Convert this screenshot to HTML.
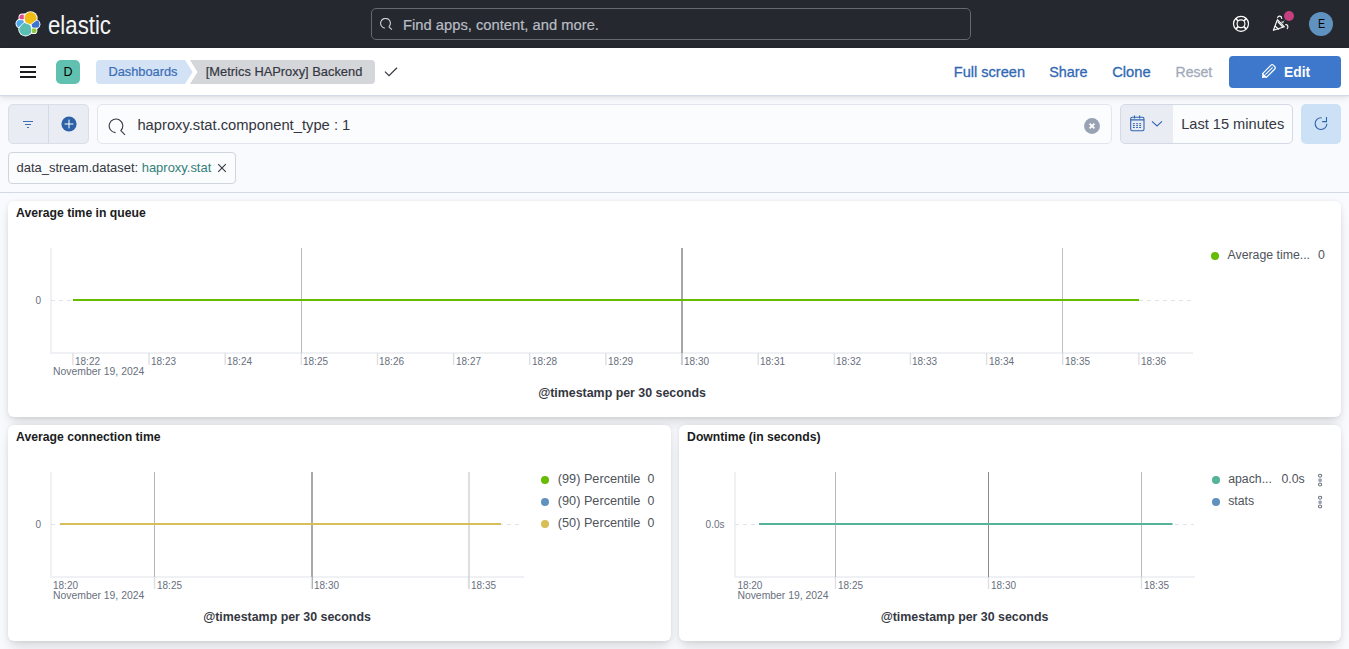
<!DOCTYPE html>
<html><head><meta charset="utf-8">
<style>
*{box-sizing:border-box;margin:0;padding:0}
html,body{width:1349px;height:649px;overflow:hidden;background:#f9fafd;font-family:"Liberation Sans",sans-serif;color:#343741}
.abs{position:absolute}
.txt{position:absolute;white-space:nowrap;line-height:1}
.med{-webkit-text-stroke:0.25px currentColor}
.panel{position:absolute;background:#fff;border-radius:6px;box-shadow:0 0.9px 4px -1px rgba(0,0,0,.08),0 2.6px 8px -1px rgba(0,0,0,.06),0 5.7px 12px -1px rgba(0,0,0,.05),0 15px 15px -1px rgba(0,0,0,.04)}
svg text{font-family:"Liberation Sans",sans-serif}
</style></head><body>
<div class="abs" style="left:0;top:0;width:1349px;height:48px;background:#25282f"></div>
<svg class="abs" style="left:12px;top:8px" width="32" height="32" viewBox="12 8 32 32">
<defs>
<clipPath id="cy"><polygon points="24.2,0 50,0 50,9.4 30.5,24.8 24.1,22.3 24.2,19.7"/></clipPath>
<clipPath id="cp"><polygon points="0,0 24.2,0 24.2,19.7 0,19.7"/></clipPath>
<clipPath id="cl"><polygon points="0,19.7 24.2,19.7 24.1,22.3 0,46.4"/></clipPath>
<clipPath id="ct"><polygon points="24.1,22.3 30.5,24.8 31.6,28.1 31.6,50 0,50 0,46.4"/></clipPath>
<clipPath id="cb"><polygon points="50,9.4 30.5,24.8 31.6,28.1 50,28.1"/></clipPath>
<clipPath id="cg"><polygon points="31.6,28.1 50,28.1 50,50 31.6,50"/></clipPath>
</defs>
<g fill="#fff">
<circle cx="30.5" cy="18.3" r="7.1"/><circle cx="22.3" cy="17.3" r="3.8"/><circle cx="20.6" cy="23.6" r="5.1"/><circle cx="25.6" cy="29.2" r="7.3"/><circle cx="35.5" cy="24.3" r="4.9"/><circle cx="33.8" cy="30.4" r="3.6"/>
</g>
<circle cx="30.5" cy="18.3" r="6.2" fill="#f0bd16" clip-path="url(#cy)"/>
<circle cx="22.3" cy="17.3" r="2.9" fill="#e54a8f" clip-path="url(#cp)"/>
<circle cx="20.6" cy="23.6" r="4.2" fill="#4fa8ee" clip-path="url(#cl)"/>
<circle cx="25.6" cy="29.2" r="6.4" fill="#5bbeb3" clip-path="url(#ct)"/>
<circle cx="35.5" cy="24.3" r="4.0" fill="#3d74cf" clip-path="url(#cb)"/>
<circle cx="33.8" cy="30.4" r="2.7" fill="#8dc63f" clip-path="url(#cg)"/>
<path d="M24.2 13 V19.7 H19 M24.2 19.7 L24.1 22.3 L18.5 28 M24.1 22.3 L30.5 24.8 L37 19.7 M30.5 24.8 L31.6 28.1 V34 M31.6 28.1 H38" fill="none" stroke="#fff" stroke-width="0.8"/>
</svg>
<div class="txt" style="left:48.3px;top:14.00px;font-size:24px;color:#f4f4f5;transform:scale(0.925,1.04);transform-origin:0 20px;">elastic</div>
<div class="abs" style="left:371px;top:8px;width:600px;height:32px;border:1px solid #66696f;border-radius:5px"></div>
<svg class="abs" style="left:378.5px;top:18.2px" width="14" height="14" viewBox="0 0 14 14"><path d="M10.04 8.64 A4.9 4.9 0 1 0 5.8 10.1" fill="none" stroke="#d0d2d6" stroke-width="1.1"/><path d="M9.7 8.6 L12.9 11.7" stroke="#d0d2d6" stroke-width="1.1"/></svg>
<div class="txt" style="left:403px;top:18.00px;font-size:14.75px;color:#b9bdc4;-webkit-text-stroke:0.2px #b9bdc4;">Find apps, content, and more.</div>
<svg class="abs" style="left:1232px;top:15px" width="18" height="18" viewBox="0 0 18 18"><circle cx="9" cy="8.8" r="7.5" fill="none" stroke="#fff" stroke-width="1.2"/><circle cx="9" cy="8.8" r="3.9" fill="none" stroke="#fff" stroke-width="1.2"/><path d="M3.9 3.7 L6.2 6 M14.1 3.7 L11.8 6 M3.9 13.9 L6.2 11.6 M14.1 13.9 L11.8 11.6" stroke="#fff" stroke-width="1.7"/></svg>
<svg class="abs" style="left:1268px;top:8px" width="30" height="28" viewBox="0 0 30 28"><g fill="none" stroke="#fff" stroke-width="1.15" stroke-linecap="round" stroke-linejoin="round"><path d="M5.4 22.3 L9.4 11.6 L16.4 18.8 Z"/><path d="M9.9 13.9 L14.6 18.8"/><path d="M7.3 18.2 L10.6 21.2"/><path d="M9.6 9.6 C10.2 7.4 13.6 7.6 13.7 10.4"/><path d="M17.8 16.6 C19.8 16.2 20.6 19.4 19.2 20.6"/></g><path d="M16.2 12.6 L13.9 14.9 M13.9 14.9 L14.1 13.1 M13.9 14.9 L15.7 14.7" stroke="#c9c9cc" stroke-width="1" fill="none"/></svg>
<div class="abs" style="left:1283.7px;top:10.5px;width:10.6px;height:10.6px;border-radius:50%;background:#c4407f"></div>
<div class="abs" style="left:1309px;top:12px;width:24px;height:24px;border-radius:50%;background:#6092c0"></div>
<div class="txt" style="left:1317.6px;top:18.00px;font-size:12.5px;color:#000;transform:scaleX(0.85);transform-origin:0 0;">E</div>
<div class="abs" style="left:0;top:48px;width:1349px;height:48px;background:#fff;border-bottom:1px solid #d3dae6;box-shadow:0 1px 2px rgba(0,0,0,.06),0 3px 7px rgba(0,0,0,.07)"></div>
<div class="abs" style="left:20px;top:66px;width:16px;height:2px;background:#1a1c21"></div>
<div class="abs" style="left:20px;top:71px;width:16px;height:2px;background:#1a1c21"></div>
<div class="abs" style="left:20px;top:76px;width:16px;height:2px;background:#1a1c21"></div>
<div class="abs" style="left:56px;top:60px;width:24px;height:24px;border-radius:5px;background:#61c1b0"></div>
<div class="txt" style="left:63.5px;top:66.00px;font-size:12.5px;color:#000;">D</div>
<svg class="abs" style="left:96px;top:60px" width="290" height="24" viewBox="0 0 290 24">
<path d="M4 0 H89 L96.7 12 L89 24 H4 A4 4 0 0 1 0 20 V4 A4 4 0 0 1 4 0 Z" fill="#d3e2f5"/>
<path d="M94 0 H275 A4 4 0 0 1 279 4 V20 A4 4 0 0 1 275 24 H94 L101.5 12 Z" fill="#d4d6da"/>
</svg>
<div class="txt" style="left:108.5px;top:66.00px;font-size:12.8px;color:#3a6db7;-webkit-text-stroke:0.2px #3a6db7;">Dashboards</div>
<div class="txt" style="left:205.8px;top:66.00px;font-size:12.87px;color:#343741;-webkit-text-stroke:0.2px #343741;">[Metrics HAProxy] Backend</div>
<svg class="abs" style="left:384px;top:67px" width="14" height="10" viewBox="0 0 14 10"><path d="M1 4.6 L5 8.6 L13 0.8" fill="none" stroke="#343741" stroke-width="1.2"/></svg>
<div class="txt" style="left:953.8px;top:65.00px;font-size:14.57px;color:#3169b3;-webkit-text-stroke:0.3px #3169b3;">Full screen</div>
<div class="txt" style="left:1049.2px;top:65.00px;font-size:14.4px;color:#3169b3;-webkit-text-stroke:0.3px #3169b3;">Share</div>
<div class="txt" style="left:1112.2px;top:65.00px;font-size:14.73px;color:#3169b3;-webkit-text-stroke:0.3px #3169b3;">Clone</div>
<div class="txt" style="left:1175.6px;top:65.00px;font-size:14.04px;color:#a2abba;-webkit-text-stroke:0.3px #a2abba;">Reset</div>
<div class="abs" style="left:1229px;top:56px;width:112px;height:32px;border-radius:4px;background:#3d78cc"></div>
<svg class="abs" style="left:1259px;top:63px" width="18" height="18" viewBox="0 0 16 16"><g transform="rotate(-45 8 8)"><path d="M0.4 8 L3.6 5.4 V10.6 Z" fill="#fff"/><path d="M3.6 5.6 H14.2 A1.4 1.4 0 0 1 15.6 7 V9 A1.4 1.4 0 0 1 14.2 10.4 H3.6 Z" fill="none" stroke="#fff" stroke-width="1.1" stroke-linejoin="round"/><path d="M4.6 8 H13.8" stroke="#fff" stroke-width="0.9"/></g></svg>
<div class="txt" style="left:1284px;top:66.00px;font-size:13.8px;font-weight:bold;color:#fff;">Edit</div>
<div class="abs" style="left:8px;top:104px;width:81px;height:40px;background:#e9edf3;border:1px solid #d9dee8;border-radius:5px"></div>
<div class="abs" style="left:48px;top:105px;width:1px;height:38px;background:#d3dae6"></div>
<svg class="abs" style="left:22px;top:119px" width="12" height="12" viewBox="0 0 12 12"><path d="M1 2.5 H11 M3 5.5 H9 M5 8.5 H7" stroke="#3d6db5" stroke-width="1.1"/></svg>
<svg class="abs" style="left:60.5px;top:115.5px" width="16" height="16" viewBox="0 0 16 16"><circle cx="8" cy="8" r="7.6" fill="#2c61a8"/><path d="M8 3.6 V12.4 M3.6 8 H12.4" stroke="#fff" stroke-width="1"/></svg>
<div class="abs" style="left:97px;top:104px;width:1015px;height:40px;background:#fbfcfd;border:1px solid #e0e5ee;border-radius:5px"></div>
<svg class="abs" style="left:108px;top:118px" width="18" height="18" viewBox="0 0 18 18"><path d="M12.8 12.6 A6.8 6.8 0 1 0 7.6 14.6" fill="none" stroke="#343741" stroke-width="1.1"/><path d="M12.6 12.4 L17 16.8" stroke="#343741" stroke-width="1.1"/></svg>
<div class="txt" style="left:137.4px;top:118.00px;font-size:14.75px;color:#343741;">haproxy.stat.component_type : 1</div>
<svg class="abs" style="left:1084px;top:118px" width="16" height="16" viewBox="0 0 16 16"><circle cx="8" cy="8" r="7.95" fill="#98a2b3"/><path d="M5.6 5.6 L10.4 10.4 M10.4 5.6 L5.6 10.4" stroke="#fff" stroke-width="1.8"/></svg>
<div class="abs" style="left:1120px;top:104px;width:173px;height:40px;background:linear-gradient(90deg,#e9edf3 0,#e9edf3 52px,#fbfcfd 52px);border:1px solid #d3dae6;border-radius:5px"></div>
<svg class="abs" style="left:1129px;top:115px" width="16" height="17" viewBox="0 0 16 17"><rect x="1.7" y="2.2" width="13.3" height="13.6" rx="1.6" fill="none" stroke="#3064b0" stroke-width="1.1"/><path d="M1.7 4.9 H15 M5.5 0.6 V3.4 M10.6 0.6 V3.4" stroke="#3064b0" stroke-width="1.1" fill="none"/><path d="M3.9 8.7h1.9M7.2 8.7h1.8M10.2 8.7h1.9M3.9 10.6h1.9M7.2 10.6h1.8M10.2 10.6h1.9M3.9 12.5h1.9M7.2 12.5h1.8M10.2 12.5h1.9" stroke="#3064b0" stroke-width="1"/></svg>
<svg class="abs" style="left:1151px;top:120px" width="12" height="8" viewBox="0 0 12 8"><path d="M1 1.4 L6 6 L11 1.4" fill="none" stroke="#3064b0" stroke-width="1.1"/></svg>
<div class="txt" style="left:1181.2px;top:117.00px;font-size:14.6px;color:#343741;">Last 15 minutes</div>
<div class="abs" style="left:1301px;top:104px;width:40px;height:40px;background:#cce1f5;border-radius:5px"></div>
<svg class="abs" style="left:1313px;top:116px" width="16" height="16" viewBox="0 0 16 16"><path d="M13.85 7.7 A5.85 5.85 0 1 1 8.6 1.85" fill="none" stroke="#2f63ab" stroke-width="1.1"/><path d="M9.2 5.6 H13.5 V1" fill="none" stroke="#2f63ab" stroke-width="1.1"/></svg>
<div class="abs" style="left:8px;top:152px;width:228px;height:32px;background:#fbfcfd;border:1px solid #cfd5df;border-radius:4px"></div>
<div class="txt" style="left:16.6px;top:162.00px;font-size:12.95px;color:#343741;">data_stream.dataset: <span style="color:#347f7b">haproxy.stat</span></div>
<svg class="abs" style="left:217px;top:163px" width="10" height="10" viewBox="0 0 10 10"><path d="M1.2 1.2 L8.8 8.8 M8.8 1.2 L1.2 8.8" stroke="#343741" stroke-width="1.1"/></svg>
<div class="abs" style="left:0;top:192px;width:1349px;height:1px;background:#d3dae6"></div>
<div class="panel" style="left:8px;top:201px;width:1333px;height:216px"></div>
<div class="panel" style="left:8px;top:425px;width:663px;height:216px"></div>
<div class="panel" style="left:679px;top:425px;width:662px;height:216px"></div>
<div class="txt" style="left:16.1px;top:207.00px;font-size:12.2px;font-weight:bold;color:#1a1c21;">Average time in queue</div>
<div class="txt" style="left:16.1px;top:431.00px;font-size:12.2px;font-weight:bold;color:#1a1c21;">Average connection time</div>
<div class="txt" style="left:687.1px;top:431.00px;font-size:12.2px;font-weight:bold;color:#1a1c21;">Downtime (in seconds)</div>
<svg class="abs" style="left:0;top:0" width="1349" height="649" viewBox="0 0 1349 649" id="charts">
<line x1="51" y1="248" x2="51" y2="354" stroke="#f0f1f4" stroke-width="2"/>
<line x1="51" y1="353" x2="1193" y2="353" stroke="#f0f1f4" stroke-width="2"/>
<line x1="51" y1="300.5" x2="1192" y2="300.5" stroke="#dfe3ea" stroke-width="1" stroke-dasharray="4 4"/>
<line x1="301.5" y1="248" x2="301.5" y2="365" stroke="#bababa" stroke-width="1"/>
<line x1="682" y1="248" x2="682" y2="365" stroke="#a6a6a6" stroke-width="2"/>
<line x1="1062.5" y1="248" x2="1062.5" y2="365" stroke="#c0c0c0" stroke-width="1"/>
<line x1="72.9" y1="353" x2="72.9" y2="365" stroke="#dcdfe4" stroke-width="1.4"/>
<line x1="149.04000000000002" y1="353" x2="149.04000000000002" y2="365" stroke="#dcdfe4" stroke-width="1.4"/>
<line x1="225.18" y1="353" x2="225.18" y2="365" stroke="#dcdfe4" stroke-width="1.4"/>
<line x1="301.32000000000005" y1="353" x2="301.32000000000005" y2="365" stroke="#dcdfe4" stroke-width="1.4"/>
<line x1="377.46000000000004" y1="353" x2="377.46000000000004" y2="365" stroke="#dcdfe4" stroke-width="1.4"/>
<line x1="453.6" y1="353" x2="453.6" y2="365" stroke="#dcdfe4" stroke-width="1.4"/>
<line x1="529.74" y1="353" x2="529.74" y2="365" stroke="#dcdfe4" stroke-width="1.4"/>
<line x1="605.88" y1="353" x2="605.88" y2="365" stroke="#dcdfe4" stroke-width="1.4"/>
<line x1="682.02" y1="353" x2="682.02" y2="365" stroke="#dcdfe4" stroke-width="1.4"/>
<line x1="758.16" y1="353" x2="758.16" y2="365" stroke="#dcdfe4" stroke-width="1.4"/>
<line x1="834.3" y1="353" x2="834.3" y2="365" stroke="#dcdfe4" stroke-width="1.4"/>
<line x1="910.4399999999999" y1="353" x2="910.4399999999999" y2="365" stroke="#dcdfe4" stroke-width="1.4"/>
<line x1="986.58" y1="353" x2="986.58" y2="365" stroke="#dcdfe4" stroke-width="1.4"/>
<line x1="1062.72" y1="353" x2="1062.72" y2="365" stroke="#dcdfe4" stroke-width="1.4"/>
<line x1="1138.8600000000001" y1="353" x2="1138.8600000000001" y2="365" stroke="#dcdfe4" stroke-width="1.4"/>
<line x1="73" y1="300" x2="1139" y2="300" stroke="#68bc00" stroke-width="2"/>
<text x="75" y="365" font-size="10" fill="#69707d">18:22</text>
<text x="151" y="365" font-size="10" fill="#69707d">18:23</text>
<text x="227" y="365" font-size="10" fill="#69707d">18:24</text>
<text x="303" y="365" font-size="10" fill="#69707d">18:25</text>
<text x="379" y="365" font-size="10" fill="#69707d">18:26</text>
<text x="456" y="365" font-size="10" fill="#69707d">18:27</text>
<text x="532" y="365" font-size="10" fill="#69707d">18:28</text>
<text x="608" y="365" font-size="10" fill="#69707d">18:29</text>
<text x="684" y="365" font-size="10" fill="#69707d">18:30</text>
<text x="760" y="365" font-size="10" fill="#69707d">18:31</text>
<text x="836" y="365" font-size="10" fill="#69707d">18:32</text>
<text x="912" y="365" font-size="10" fill="#69707d">18:33</text>
<text x="989" y="365" font-size="10" fill="#69707d">18:34</text>
<text x="1065" y="365" font-size="10" fill="#69707d">18:35</text>
<text x="1141" y="365" font-size="10" fill="#69707d">18:36</text>
<text x="53" y="375.4" font-size="10.4" fill="#69707d">November 19, 2024</text>
<text x="41" y="303.5" font-size="10" fill="#69707d" text-anchor="end">0</text>
<text x="622" y="397.2" font-size="12.4" fill="#343741" font-weight="700" text-anchor="middle">@timestamp per 30 seconds</text>
<circle cx="1215" cy="256" r="4" fill="#68bc00"/>
<text x="1227.5" y="259" font-size="12.3" fill="#4e535b">Average time...</text>
<text x="1318" y="259" font-size="12.3" fill="#4e535b">0</text>
<line x1="51" y1="472" x2="51" y2="578" stroke="#f0f1f4" stroke-width="2"/>
<line x1="51" y1="577" x2="524" y2="577" stroke="#f0f1f4" stroke-width="2"/>
<line x1="51" y1="524.5" x2="523" y2="524.5" stroke="#dfe3ea" stroke-width="1" stroke-dasharray="4 4"/>
<line x1="154.5" y1="472" x2="154.5" y2="589" stroke="#b5b5b5" stroke-width="1"/>
<line x1="312" y1="472" x2="312" y2="589" stroke="#a8a8a8" stroke-width="2"/>
<line x1="469" y1="472" x2="469" y2="589" stroke="#c8c8c8" stroke-width="1.2"/>
<line x1="154.5" y1="577" x2="154.5" y2="589" stroke="#dcdfe4" stroke-width="1.4"/>
<line x1="311.5" y1="577" x2="311.5" y2="589" stroke="#dcdfe4" stroke-width="1.4"/>
<line x1="468.5" y1="577" x2="468.5" y2="589" stroke="#dcdfe4" stroke-width="1.4"/>
<line x1="60" y1="524" x2="501" y2="524" stroke="#d6bf57" stroke-width="2"/>
<text x="53" y="588.8" font-size="10" fill="#69707d">18:20</text>
<text x="157.0" y="588.8" font-size="10" fill="#69707d">18:25</text>
<text x="314.0" y="588.8" font-size="10" fill="#69707d">18:30</text>
<text x="471.0" y="588.8" font-size="10" fill="#69707d">18:35</text>
<text x="53" y="598.8" font-size="10.4" fill="#69707d">November 19, 2024</text>
<text x="41" y="527.5" font-size="10" fill="#69707d" text-anchor="end">0</text>
<text x="287" y="621.2" font-size="12.4" fill="#343741" font-weight="700" text-anchor="middle">@timestamp per 30 seconds</text>
<circle cx="545" cy="480" r="4" fill="#68bc00"/>
<text x="557.8" y="483" font-size="12.7" fill="#4e535b">(99) Percentile</text>
<text x="647.6" y="483" font-size="12.3" fill="#4e535b">0</text>
<circle cx="545" cy="502" r="4" fill="#6092c0"/>
<text x="557.8" y="505" font-size="12.7" fill="#4e535b">(90) Percentile</text>
<text x="647.6" y="505" font-size="12.3" fill="#4e535b">0</text>
<circle cx="545" cy="524" r="4" fill="#d6bf57"/>
<text x="557.8" y="527" font-size="12.7" fill="#4e535b">(50) Percentile</text>
<text x="647.6" y="527" font-size="12.3" fill="#4e535b">0</text>
<line x1="735" y1="472" x2="735" y2="578" stroke="#f0f1f4" stroke-width="2"/>
<line x1="735" y1="577" x2="1195" y2="577" stroke="#f0f1f4" stroke-width="2"/>
<line x1="735" y1="524.5" x2="1194" y2="524.5" stroke="#dfe3ea" stroke-width="1" stroke-dasharray="4 4"/>
<line x1="835.5" y1="472" x2="835.5" y2="589" stroke="#bababa" stroke-width="1"/>
<line x1="988.5" y1="472" x2="988.5" y2="589" stroke="#8c8c8c" stroke-width="1"/>
<line x1="1141.5" y1="472" x2="1141.5" y2="589" stroke="#bababa" stroke-width="1"/>
<line x1="835.5" y1="577" x2="835.5" y2="589" stroke="#dcdfe4" stroke-width="1.4"/>
<line x1="988.5" y1="577" x2="988.5" y2="589" stroke="#dcdfe4" stroke-width="1.4"/>
<line x1="1141.5" y1="577" x2="1141.5" y2="589" stroke="#dcdfe4" stroke-width="1.4"/>
<line x1="759" y1="524" x2="1172.5" y2="524" stroke="#54b399" stroke-width="2"/>
<text x="737.4" y="588.8" font-size="10" fill="#69707d">18:20</text>
<text x="838.0" y="588.8" font-size="10" fill="#69707d">18:25</text>
<text x="991.0" y="588.8" font-size="10" fill="#69707d">18:30</text>
<text x="1144.0" y="588.8" font-size="10" fill="#69707d">18:35</text>
<text x="737.4" y="598.6" font-size="10.4" fill="#69707d">November 19, 2024</text>
<text x="724.5" y="527.5" font-size="10" fill="#69707d" text-anchor="end">0.0s</text>
<text x="964.5" y="621.2" font-size="12.4" fill="#343741" font-weight="700" text-anchor="middle">@timestamp per 30 seconds</text>
<circle cx="1216" cy="480" r="4" fill="#54b399"/>
<text x="1228.2" y="483" font-size="12.3" fill="#4e535b">apach...</text>
<text x="1281.5" y="483" font-size="12.3" fill="#4e535b">0.0s</text>
<rect x="1318.6" y="474.4" width="3" height="2.6" rx="0.6" fill="none" stroke="#535966" stroke-width="0.9"/>
<rect x="1318.4" y="478.4" width="3.4" height="3.6" rx="1.3" fill="#98a2b3"/>
<rect x="1318.6" y="483.2" width="3" height="2.6" rx="0.6" fill="none" stroke="#535966" stroke-width="0.9"/>
<circle cx="1216" cy="502" r="4" fill="#6092c0"/>
<text x="1228.2" y="505" font-size="12.3" fill="#4e535b">stats</text>
<rect x="1318.6" y="496.4" width="3" height="2.6" rx="0.6" fill="none" stroke="#535966" stroke-width="0.9"/>
<rect x="1318.4" y="500.4" width="3.4" height="3.6" rx="1.3" fill="#98a2b3"/>
<rect x="1318.6" y="505.2" width="3" height="2.6" rx="0.6" fill="none" stroke="#535966" stroke-width="0.9"/>
</svg>
</body></html>
